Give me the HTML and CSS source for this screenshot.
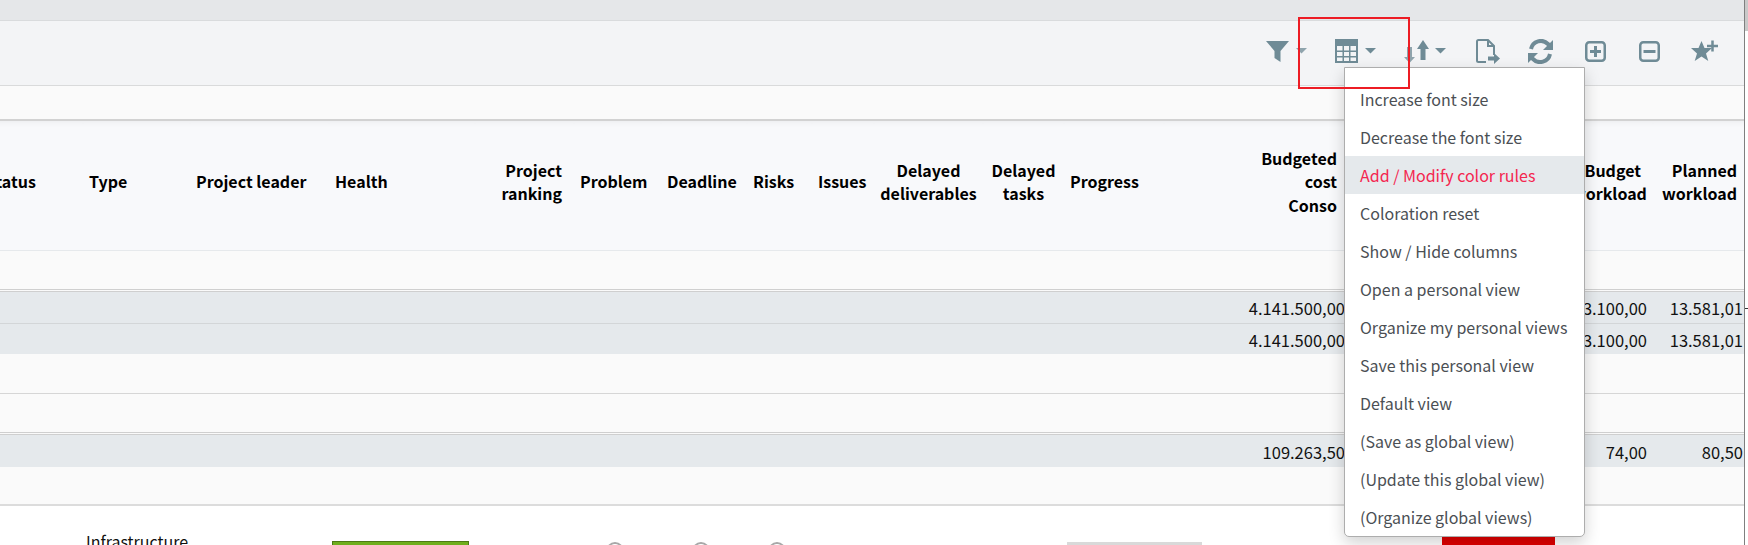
FILE: index.html

```html
<!DOCTYPE html>
<html>
<head>
    <title>Projects</title>
    <meta name="viewport" content="width=device-width, initial-scale=1.0">
    <link rel="stylesheet" href="styles.css">
</head>
<body>
    <div class="scroll-thumb"></div>
    <div class="scroll-tick"></div>
    <div class="page">
        <div class="top-strip"></div>

        <!-- Toolbar -->
        <div class="toolbar">
            <svg class="tool" width="41" height="24" viewBox="0 0 41 24">
                <path d="M0 2h23l-8.500 10v11l-6-4v-7z"/>
                <path class="dim" d="M30 9h11l-5.500 5.500z"/>
            </svg>
            <svg class="tool" width="41" height="25" viewBox="0 0 41 25">
                <path fill-rule="evenodd" d="M0 0h23v24h-23zM2 7v4.500h5.500v-4.500zM9 7v4.500h5v-4.500zM15.500 7v4.500h5.500v-4.500zM2 13v4h5.500v-4zM9 13v4h5v-4zM15.500 13v4h5.500v-4zM2 18.500v3.500h5.500v-3.500zM9 18.500v3.500h5v-3.500zM15.500 18.500v3.500h5.500v-3.500z"/>
                <path d="M30 9h11l-5.500 5.500z"/>
            </svg>
            <svg class="tool" width="44" height="25" viewBox="0 0 44 25">
                <path class="dim" d="M3 8h5v10h3l-5.500 6-5.500-6h3z"/>
                <path d="M16.500 21v-11h-3.500l6-9 6 9h-3.500v11z"/>
                <path d="M31 9h11l-5.500 5.500z"/>
            </svg>
            <svg class="tool" width="24" height="25" viewBox="0 0 24 25">
                <path class="line" d="M10 23H2.500a1.500 1.500 0 0 1-1.500-1.500V2.500a1.500 1.500 0 0 1 1.500-1.500H12l6 6v9"/>
                <path class="line" d="M12 1v6h6"/>
                <path d="M12 17.500h6v-3.500l6 5.500-6 5.500v-3.500h-6z"/>
            </svg>
            <svg class="tool" width="29" height="25" viewBox="0 0 29 25">
                <path class="thick" d="M3 10a10 10 0 0 1 17-5l3 3"/>
                <path d="M25 1v10h-10z"/>
                <path class="thick" d="M22 15a10 10 0 0 1-17 5l-3-3"/>
                <path d="M0 24v-10h10z"/>
            </svg>
            <svg class="tool" width="26" height="24" viewBox="0 0 26 24">
                <rect class="box" x="1.250" y="3.250" width="18.500" height="18.500" rx="3"/>
                <path d="M9 7h3v4h4v3h-4v4h-3v-4h-4v-3h4z"/>
            </svg>
            <svg class="tool" width="24" height="24" viewBox="0 0 24 24">
                <rect class="box" x="1.250" y="3.250" width="18.500" height="18.500" rx="3"/>
                <path d="M4.500 11h12v3h-12z"/>
            </svg>
            <svg class="tool" width="27" height="24" viewBox="0 0 27 24">
                <path d="M10.500 2l3 7h7.500l-6 5.500 2.300 7.500-6.800-4.500-6.800 4.500 2.300-7.500-6-5.500h7.500z"/>
                <path d="M20.250 1.500h2.500v4.250h4.250v2.500h-4.250v4.250h-2.500v-4.250h-4.250v-2.500h4.250z"/>
            </svg>
        </div>

        <div class="band"></div>

        <!-- Grid -->
        <table class="grid">
            <colgroup>
                <col class="c-status"><col class="c-type"><col class="c-leader"><col class="c-health">
                <col class="c-ranking"><col class="c-problem"><col class="c-deadline"><col class="c-risks">
                <col class="c-issues"><col class="c-deliv"><col class="c-tasks"><col class="c-progress">
                <col class="c-cost"><col class="c-hidden"><col class="c-budget"><col class="c-planned">
            </colgroup>
            <tr class="head">
                <th class="status-head">Status</th>
                <th>Type</th>
                <th>Project leader</th>
                <th>Health</th>
                <th class="num">Project<br>ranking</th>
                <th>Problem</th>
                <th>Deadline</th>
                <th>Risks</th>
                <th>Issues</th>
                <th class="mid">Delayed<br>deliverables</th>
                <th class="mid">Delayed<br>tasks</th>
                <th>Progress</th>
                <th class="num">Budgeted<br>cost<br>Conso</th>
                <th></th>
                <th class="num">Budget<br>workload</th>
                <th class="num">Planned<br>workload</th>
            </tr>
            <tr class="blank closing"><td colspan="16"></td></tr>
            <tr class="total ruled">
                <td colspan="12"></td>
                <td class="num cost">4.141.500,00</td>
                <td></td>
                <td class="num">83.100,00</td>
                <td class="num">13.581,01</td>
            </tr>
            <tr class="total short">
                <td colspan="12"></td>
                <td class="num cost">4.141.500,00</td>
                <td></td>
                <td class="num">83.100,00</td>
                <td class="num">13.581,01</td>
            </tr>
            <tr class="blank"><td colspan="16"></td></tr>
            <tr class="blank closing"><td colspan="16"></td></tr>
            <tr class="total">
                <td colspan="12"></td>
                <td class="num cost">109.263,50</td>
                <td></td>
                <td class="num">74,00</td>
                <td class="num">80,50</td>
            </tr>
            <tr class="blank last"><td colspan="16"></td></tr>
            <tr class="project">
                <td></td>
                <td>Infrastructure</td>
                <td></td>
                <td><div class="health"></div></td>
                <td></td>
                <td class="dot-cell"><div class="dot"></div></td>
                <td class="dot-cell"><div class="dot"></div></td>
                <td class="dot-cell"><div class="dot"></div></td>
                <td colspan="3"></td>
                <td colspan="2"><div class="progress"></div></td>
                <td><div class="alert"></div></td>
                <td colspan="2"></td>
            </tr>
        </table>
    </div>

    <!-- Opened view menu -->
    <ul class="menu">
        <li>Increase font size</li>
        <li>Decrease the font size</li>
        <li class="hover">Add / Modify color rules</li>
        <li>Coloration reset</li>
        <li>Show / Hide columns</li>
        <li>Open a personal view</li>
        <li>Organize my personal views</li>
        <li>Save this personal view</li>
        <li>Default view</li>
        <li>(Save as global view)</li>
        <li>(Update this global view)</li>
        <li>(Organize global views)</li>
    </ul>

    <!-- Red annotation box -->
    <div class="marker"></div>
</body>
</html>
```

FILE: styles.css

```css
html, body {
    margin: 0;
    height: 545px;
    overflow: hidden;
    background: #fff;
}
body {
    font-family: "Noto Sans CJK SC", "Noto Sans", sans-serif;
    font-size: 16px;
    color: #111;
}
.page {
    width: 1744px;
    height: 545px;
    border-right: 1px solid #7f7f7f;
    overflow: hidden;
}
.scroll-thumb {
    position: absolute;
    top: 0;
    right: 0;
    width: 3px;
    height: 31px;
    background: #c9c9c9;
}
.scroll-tick {
    position: absolute;
    top: 308px;
    right: 0;
    width: 3px;
    height: 1px;
    background: #333;
}
.top-strip {
    height: 20px;
    background: #e5e7e9;
    border-bottom: 1px solid #d9dbdd;
}

/* toolbar */
.toolbar {
    height: 65px;
    box-sizing: border-box;
    border-bottom: 1px solid #d9dadb;
    background: #f3f4f6;
    display: flex;
    justify-content: flex-end;
    align-items: flex-start;
    gap: 28px;
    padding: 18px 26px 0 0;
}
.tool path { fill: #6f8b96; }
.tool path.dim { fill: #8fa4ad; }
.tool path.line {
    fill: none;
    stroke: #6f8b96;
    stroke-width: 2;
}
.tool path.thick {
    fill: none;
    stroke: #6f8b96;
    stroke-width: 4;
}
.tool .box {
    fill: none;
    stroke: #6f8b96;
    stroke-width: 2.5;
}
.band {
    height: 35px;
    box-sizing: border-box;
    background: #fafafa;
    border-bottom: 2px solid #d2d2d2;
}

/* grid, scrolled a little to the right so Status is cut */
.grid {
    margin-left: -16px;
    width: 1765px;
    table-layout: fixed;
    border-collapse: separate;
    border-spacing: 0;
}
.c-status { width: 99px; }
.c-type { width: 107px; }
.c-leader { width: 139px; }
.c-health { width: 146px; }
.c-ranking { width: 99px; }
.c-problem { width: 87px; }
.c-deadline { width: 86px; }
.c-risks { width: 65px; }
.c-issues { width: 62px; }
.c-deliv { width: 109px; }
.c-tasks { width: 81px; }
.c-progress { width: 100px; }
.c-cost { width: 185px; }
.c-hidden { width: 217px; }
.c-budget { width: 87px; }
.c-planned { width: 96px; }

th, td {
    box-sizing: border-box;
    padding: 0 6px;
    overflow: hidden;
    white-space: nowrap;
}
th {
    height: 130px;
    padding-bottom: 7px;
    font-weight: 700;
    line-height: 23.300px;
    text-align: left;
    color: #000;
    background: #f8f9fb;
    border-bottom: 1px solid #e6e9ec;
    box-shadow: inset 0 7px 6px -6px rgba(0, 0, 0, 0.06);
}
th.num {
    text-align: right;
    padding-right: 12px;
}
th.mid { text-align: center; }
th.status-head { padding-left: 2px; }

.blank td {
    height: 40px;
    background: #fafafa;
    border-bottom: 1px solid #d6d6d6;
}
.blank.closing td {
    height: 41px;
    border-bottom: 3px double #cfcfcf;
}
.blank.last td {
    height: 39px;
    border-bottom: 2px solid #dcdcdc;
}
.total td {
    height: 32px;
    background: #e5e9ec;
}
.total.ruled td { border-bottom: 1px solid #d3d6d8; }
.total.short td { height: 30px; }
.total td.num {
    text-align: right;
    font-size: 16.500px;
    padding: 1px 6px 0 0;
    overflow: visible;
}
.total td.num.cost { padding-right: 4px; }

/* first project row, only its top shows */
.project td {
    height: 70px;
    vertical-align: top;
    line-height: 22px;
    padding: 24px 0 0 3px;
}
.health {
    width: 137px;
    height: 24px;
    margin-top: 11px;
    box-sizing: border-box;
    background: #6fae1c;
    border: 1px solid #4c7a14;
}
.project .dot-cell { padding: 36px 6px 0 0; }
.dot {
    width: 18px;
    height: 18px;
    margin: 0 auto;
    box-sizing: border-box;
    border: 2px solid #a8a8a8;
    border-radius: 50%;
}
.progress {
    width: 135px;
    height: 20px;
    margin-top: 12px;
    background: #d9d9d9;
}
.alert {
    width: 113px;
    height: 30px;
    margin-left: 90px;
    background: #e00000;
}

/* dropdown */
.menu {
    position: absolute;
    left: 1344px;
    top: 67px;
    width: 239px;
    margin: 0;
    padding: 12px 0 0;
    list-style: none;
    background: #fff;
    border: 1px solid #adadad;
    border-radius: 0 0 5px 5px;
    box-shadow: 0 6px 16px rgba(0, 0, 0, 0.18);
}
.menu li {
    height: 38px;
    line-height: 38px;
    padding-left: 15px;
    color: #4b4f54;
}
.menu li.hover {
    background: #e5e9ec;
    color: #f4264f;
}
.marker {
    position: absolute;
    left: 1298px;
    top: 17px;
    width: 108px;
    height: 68px;
    border: 2px solid #ed1c24;
}
```
